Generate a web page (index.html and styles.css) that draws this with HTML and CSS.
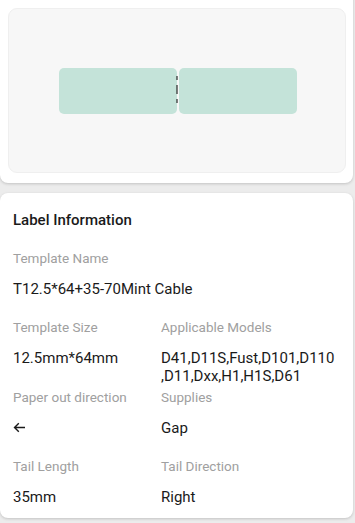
FILE: index.html
```html
<!DOCTYPE html>
<html>
<head>
<meta charset="utf-8">
<link rel="stylesheet" href="styles.css">
</head>
<body>
<div class="card preview-card">
  <div class="preview-box">
    <div class="strip">
      <div class="label-piece"></div>
      <div class="label-piece"></div>
      <svg class="cut" width="4" height="30" viewBox="0 0 4 30">
        <path d="M2 0v4M2 9v9M2 23v4" stroke="#2a2a2a" stroke-width="1.2"/>
      </svg>
    </div>
  </div>
</div>
<div class="card info-card">
  <div class="info-title">Label Information</div>
  <div class="grid">
    <div class="item full">
      <div class="k">Template Name</div>
      <div class="v">T12.5*64+35-70Mint Cable</div>
    </div>
    <div class="item">
      <div class="k">Template Size</div>
      <div class="v">12.5mm*64mm</div>
    </div>
    <div class="item">
      <div class="k">Applicable Models</div>
      <div class="v">D41,D11S,Fust,D101,D110<br>,D11,Dxx,H1,H1S,D61</div>
    </div>
    <div class="item">
      <div class="k">Paper out direction</div>
      <div class="v v-icon"><svg class="arrow" width="13" height="11" viewBox="0 0 13 11"><path d="M12 5.5H1.5M5.8 1.2L1.5 5.5l4.3 4.3" fill="none" stroke="#1a1a1a" stroke-width="1.4"/></svg></div>
    </div>
    <div class="item">
      <div class="k">Supplies</div>
      <div class="v">Gap</div>
    </div>
    <div class="item">
      <div class="k">Tail Length</div>
      <div class="v">35mm</div>
    </div>
    <div class="item">
      <div class="k">Tail Direction</div>
      <div class="v">Right</div>
    </div>
  </div>
</div>
</body>
</html>
```

FILE: styles.css
```css
html, body {
  margin: 0;
  padding: 0;
}
body {
  background: #ececec;
  font-family: Roboto, "Noto Sans", sans-serif;
  width: 355px;
  height: 523px;
  overflow: hidden;
}
.card {
  background: #fff;
  width: 353px;
  border-radius: 8px;
  box-shadow: 0 1px 3px rgba(0,0,0,0.18);
  box-sizing: border-box;
}
.preview-card {
  margin-top: -10px;
  padding: 18px 7px 10px 8px;
  height: 193px;
}
.preview-box {
  height: 165px;
  background: #f7f7f7;
  border: 1px solid #efefef;
  border-radius: 9px;
  box-sizing: border-box;
  display: flex;
  align-items: center;
  justify-content: center;
}
.strip {
  position: relative;
  display: flex;
  gap: 2px;
  margin-left: 2px;
}
.label-piece {
  width: 118px;
  height: 46px;
  background: #c4e3d9;
  border-radius: 5px;
}
.cut {
  position: absolute;
  left: 116px;
  top: 8px;
}
.info-card {
  margin-top: 10px;
  height: 325px;
  padding: 17px 0 0 13px;
}
.info-title {
  font-size: 15px;
  font-weight: 500;
  color: #1a1a1a;
  line-height: 20px;
}
.grid {
  margin-top: 18px;
  display: grid;
  grid-template-columns: 148px 1fr;
  row-gap: 2px;
}
.item.full {
  grid-column: 1 / 3;
}
.k {
  font-size: 13.5px;
  color: #a0a0a0;
  line-height: 20px;
}
.v {
  margin-top: 12px;
  min-height: 35px;
  font-size: 15px;
  color: #1a1a1a;
  line-height: 18px;
  box-sizing: border-box;
}
.v-icon {
  padding-top: 3px;
}
.arrow {
  display: block;
}
```
